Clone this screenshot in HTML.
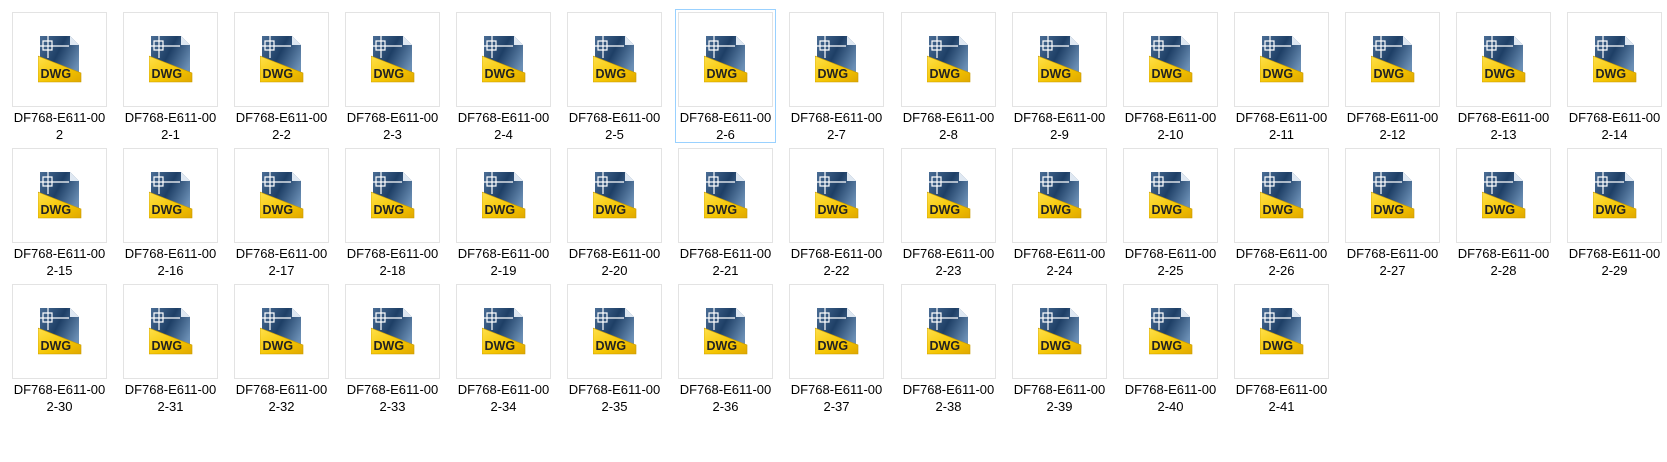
<!DOCTYPE html>
<html><head><meta charset="utf-8"><style>
body{margin:0;width:1667px;height:462px;background:#fff;font-family:"Liberation Sans","Noto Sans CJK SC",sans-serif;position:relative;overflow:hidden}
.t{position:absolute;width:101px;height:134px}
.b{position:absolute;left:3px;top:3px;width:95px;height:95px;border:1px solid #e3e3e3;box-sizing:border-box}
.sel{border:1px solid #99d1ff;left:0;top:0;width:101px;height:134px;position:absolute;box-sizing:border-box}
.i{position:absolute;left:29px;top:27px}
.l{position:absolute;left:-4px;top:100px;width:109px;text-align:center;font-size:13px;line-height:17px;color:#000}
</style></head><body>
<svg width="0" height="0" style="position:absolute"><defs>
<linearGradient id="bl" x1="0" y1="0" x2="1" y2="0.6"><stop offset="0" stop-color="#4a6d95"/><stop offset="0.5" stop-color="#1e3f66"/><stop offset="1" stop-color="#6b8fb5"/></linearGradient>
<linearGradient id="ye" x1="0" y1="0" x2="1" y2="1"><stop offset="0" stop-color="#ffe04a"/><stop offset="0.6" stop-color="#f4c400"/><stop offset="1" stop-color="#e0a800"/></linearGradient>
<g id="ic">
<path d="M2 0H32L41 9V46H2Z" fill="url(#bl)"/>
<path d="M32 0L41 9H32Z" fill="#dfe8f2"/>
<path d="M2 10H31M10 0V22M5 5H14V14H5Z" stroke="#fff" stroke-width="1.2" fill="none"/>
<path d="M0 20L43 37V46H0Z" fill="url(#ye)" stroke="#c89a00" stroke-width="0.6"/>
<text x="2.5" y="42" font-family="Liberation Sans,sans-serif" font-weight="bold" font-size="12.5" fill="#222">DWG</text>
</g></defs></svg>
<div id="g"></div>
<script>
var h='';var n=0;
for(var r=0;r<3;r++)for(var c=0;c<15;c++){if(n>41)break;var s=n==0?'2':'2-'+n;
var x=Math.round(9+c*111.07),y=9+r*136;
h+='<div class="t" style="left:'+x+'px;top:'+y+'px">'+(n==6?'<div class="sel"></div>':'')+'<div class="b"></div><svg class="i" width="44" height="47"><use href="#ic"/></svg><div class="l">DF768-E611-00<br>'+s+'</div></div>';n++;}
document.getElementById('g').innerHTML=h;
</script>
</body></html>
